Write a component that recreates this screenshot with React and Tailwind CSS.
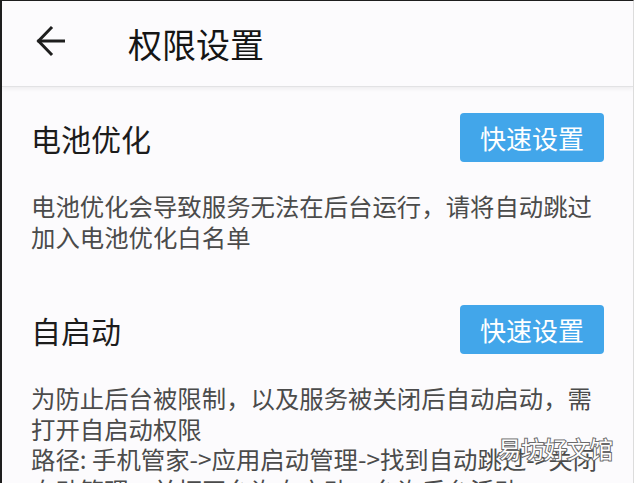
import React from 'react';

const FONT = { fontFamily: '"Noto Sans CJK SC", "Noto Sans", sans-serif' };

function QuickButton() {
  return (
    <button className="flex h-[49px] w-[144px] items-center justify-center rounded-[4px] bg-[#42a6ea] text-[26px] text-white">
      快速设置
    </button>
  );
}

function Section({ title, lines, className = '' }) {
  return (
    <div className={className}>
      <div className="flex items-center justify-between">
        <span className="text-[30px] leading-none text-[#1c1c1c]">{title}</span>
        <QuickButton />
      </div>
      <div className="mt-[29px] text-[24.4px] leading-[30.5px] text-[#4b4b4b]">
        {lines.map((line, i) => (
          <div key={i} className="whitespace-nowrap">{line}</div>
        ))}
      </div>
    </div>
  );
}

export default function App() {
  return (
    <div className="h-[483px] w-[640px] overflow-hidden bg-white" style={FONT}>
      <div className="relative h-[483px] w-[634px] overflow-hidden border-l-2 border-t border-r border-l-[#1e1e1e] border-t-[#1e1e1e] border-r-[#dcdcdc] bg-[#fcfbfd]">
        {/* Header */}
        <div className="flex h-[86px] items-center border-b border-[#e2e2e4] shadow-[0_2px_4px_rgba(0,0,0,0.06)]">
          <svg width="30" height="32" viewBox="0 0 30 32" className="ml-[33px] mt-[-6px]" fill="none" stroke="#1e1e1e" strokeWidth="3" strokeLinecap="square">
            <path d="M4 16 H29" />
            <path d="M16 3 L3.5 16 L16 29" />
          </svg>
          <span className="ml-[63px] text-[34px] leading-none text-[#151515]">权限设置</span>
        </div>

        <div className="px-[29px]">
          <Section
            className="pt-[26px]"
            title="电池优化"
            lines={['电池优化会导致服务无法在后台运行，请将自动跳过', '加入电池优化白名单']}
          />
          <Section
            className="pt-[53px]"
            title="自启动"
            lines={[
              '为防止后台被限制，以及服务被关闭后自动启动，需',
              '打开自启动权限',
              '路径: 手机管家->应用启动管理->找到自动跳过->关闭',
              '自动管理，并打开允许自启动、允许后台活动',
            ]}
          />
        </div>

        {/* Watermark */}
        <div className="absolute left-[496px] top-[436px] text-[23px] leading-none text-white [-webkit-text-stroke:2px_#6a6a6a] [paint-order:stroke_fill]">
          易坊好文馆
        </div>
      </div>
    </div>
  );
}
